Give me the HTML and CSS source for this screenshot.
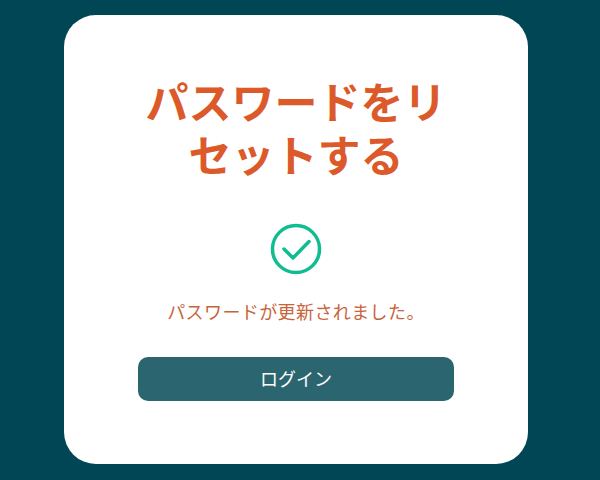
FILE: index.html
```html
<!DOCTYPE html>
<html lang="ja">
<head>
    <meta charset="UTF-8">
    <title>パスワードをリセットする</title>
    <link rel="stylesheet" href="styles.css">
</head>
<body>
    <main class="card">
        <h1 class="title">パスワードをリセットする</h1>
        <svg class="check-icon" viewBox="0 0 52 52" fill="none" stroke="currentColor" stroke-width="3.5" stroke-linecap="round" stroke-linejoin="round" aria-hidden="true">
            <circle cx="26" cy="26" r="23.5"></circle>
            <polyline points="14 26 23 35 39 18.5"></polyline>
        </svg>
        <p class="message">パスワードが更新されました。</p>
        <a class="login-btn" href="#">ログイン</a>
    </main>
</body>
</html>
```

FILE: styles.css
```css
* {
    box-sizing: border-box;
    margin: 0;
    padding: 0;
}

body {
    background-color: #004655;
    font-family: "Noto Sans CJK JP", "Noto Sans", sans-serif;
    height: 480px;
    overflow: hidden;
    padding: 15px 72px 16px 64px;
}

.card {
    background-color: #ffffff;
    border-radius: 32px;
    height: 449px;
    padding: 59px 74px 0;
    display: flex;
    flex-direction: column;
    align-items: center;
}

.title {
    color: #dc5a2a;
    font-size: 43px;
    font-weight: 700;
    line-height: 53px;
    text-align: center;
    width: 316px;
}

.check-icon {
    color: #12bc92;
    width: 52px;
    height: 52px;
    margin-top: 43px;
}

.message {
    color: #c8643c;
    font-size: 18px;
    letter-spacing: 0.4px;
    line-height: 24px;
    margin-top: 24px;
}

.login-btn {
    background-color: #2b6670;
    border-radius: 10px;
    color: #ffffff;
    display: block;
    font-size: 18px;
    height: 44px;
    line-height: 42px;
    margin-top: 34px;
    text-align: center;
    text-decoration: none;
    width: 316px;
}
```
